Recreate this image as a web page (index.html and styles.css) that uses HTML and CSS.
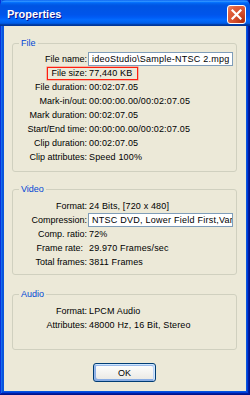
FILE: index.html
```html
<!DOCTYPE html>
<html>
<head>
<meta charset="utf-8">
<link rel="stylesheet" href="styles.css">
</head>
<body>
<div class="window">
  <div class="titlebar">
    <span class="title">Properties</span>
    <button class="close" aria-label="Close">
      <svg width="11" height="11" viewBox="0 0 11 11"><path d="M1.5 1.5 L9.5 9.5 M9.5 1.5 L1.5 9.5" stroke="#fff" stroke-width="2.2" stroke-linecap="square"/></svg>
    </button>
  </div>
  <div class="client">
    <div class="group group-file">
      <span class="legend">File</span>
      <div class="rows">
        <span class="lbl">File name:</span><span class="val"><span class="textbox">ideoStudio\Sample-NTSC 2.mpg</span></span>
        <span class="lbl">File size:</span><span class="val">77,440 KB</span>
        <span class="lbl">File duration:</span><span class="val">00:02:07.05</span>
        <span class="lbl">Mark-in/out:</span><span class="val">00:00:00.00/00:02:07.05</span>
        <span class="lbl">Mark duration:</span><span class="val">00:02:07.05</span>
        <span class="lbl">Start/End time:</span><span class="val">00:00:00.00/00:02:07.05</span>
        <span class="lbl">Clip duration:</span><span class="val">00:02:07.05</span>
        <span class="lbl">Clip attributes:</span><span class="val">Speed 100%</span>
      </div>
      <div class="highlight"></div>
    </div>
    <div class="group group-video">
      <span class="legend">Video</span>
      <div class="rows">
        <span class="lbl">Format:</span><span class="val">24 Bits, [720 x 480]</span>
        <span class="lbl">Compression:</span><span class="val"><span class="textbox">NTSC DVD, Lower Field First,Vari</span></span>
        <span class="lbl">Comp. ratio:</span><span class="val">72%</span>
        <span class="lbl lbl-space">Frame rate:</span><span class="val">29.970 Frames/sec</span>
        <span class="lbl">Total frames:</span><span class="val">3811 Frames</span>
      </div>
    </div>
    <div class="group group-audio">
      <span class="legend">Audio</span>
      <div class="rows">
        <span class="lbl">Format:</span><span class="val">LPCM Audio</span>
        <span class="lbl">Attributes:</span><span class="val">48000 Hz, 16 Bit, Stereo</span>
      </div>
    </div>
    <div class="buttons">
      <button class="ok">OK</button>
    </div>
  </div>
</div>
</body>
</html>
```
FILE: styles.css
```css
* { box-sizing: border-box; }
html, body { margin: 0; padding: 0; }
body {
  width: 250px;
  height: 395px;
  overflow: hidden;
  font-family: "Liberation Sans", Arial, sans-serif;
  font-size: 9px;
  color: #000;
}
.window {
  width: 250px;
  height: 395px;
  display: flex;
  flex-direction: column;
  background: #0855dd;
  box-shadow: inset -1px -1px #00138c, inset 1px 0 #0831d9, inset -2px -2px #001ea0, inset 2px 0 #166aee, inset -3px -3px #003bda, inset 3px 0 #0855dd;
}
.titlebar {
  height: 26px;
  flex: none;
  display: flex;
  align-items: center;
  justify-content: space-between;
  padding: 0 4px 0 7px;
  border-radius: 6px 6px 0 0;
  background: linear-gradient(180deg, #0058ee 0%, #3593ff 4%, #288eff 6%, #127dff 8%, #036ffc 10%, #0262ee 14%, #0057e5 20%, #0054e3 24%, #0055eb 56%, #005bf5 66%, #026afe 76%, #0062ef 86%, #0052d6 92%, #0040ab 94%, #003092 100%);
}
.title {
  font-weight: bold;
  font-size: 11px;
  color: #fff;
  text-shadow: 1px 1px #0f1089;
  margin-top: 1px;
}
.close {
  width: 19px;
  height: 19px;
  margin-top: 2px;
  padding: 0;
  border: 1px solid #fff;
  border-radius: 3px;
  display: flex;
  align-items: center;
  justify-content: center;
  background: radial-gradient(circle at 90% 90%, #b0300e 0%, #d04a28 35%, #e2603c 75%, #ee8a6c 100%);
}
.close svg { display: block; }
.client {
  flex: 1;
  margin: 0 4px 4px 4px;
  background: #ece9d8;
  padding: 17px 9px 0 8px;
  display: flex;
  flex-direction: column;
}
.group {
  position: relative;
  border: 1px solid #d0d0bf;
  border-radius: 3px;
}
.group-file { padding: 8px 0 7px; }
.group-video { margin-top: 17px; padding: 9px 0 5px; }
.group-audio { margin-top: 19px; padding: 9px 0 17px; }
.legend {
  position: absolute;
  top: -6px;
  left: 6px;
  padding: 0 2px;
  line-height: 11px;
  background: #ece9d8;
  color: #0046d5;
}
.rows {
  display: grid;
  grid-template-columns: 74px 1fr;
  column-gap: 2px;
  grid-auto-rows: 14px;
  line-height: 14px;
  white-space: nowrap;
}
.lbl { text-align: right; }
.lbl-space { padding-right: 4px; }
.val { letter-spacing: 0.15px; }
.textbox {
  display: block;
  margin-left: -1px;
  width: 145px;
  height: 14px;
  line-height: 12px;
  padding-left: 3px;
  border: 1px solid #7f9db9;
  background: #fff;
  overflow: hidden;
  letter-spacing: 0.25px;
}
.highlight {
  position: absolute;
  left: 34px;
  top: 23px;
  width: 91px;
  height: 13px;
  border: 1px solid #ff1e10;
  box-shadow: 0 0 0 0.5px rgba(255, 60, 40, 0.6);
}
.buttons {
  margin-top: 13px;
  display: flex;
  justify-content: center;
}
.ok {
  width: 63px;
  height: 19px;
  padding: 0;
  font-family: "Liberation Sans", Arial, sans-serif;
  font-size: 9px;
  color: #000;
  border: 1px solid #003c74;
  border-radius: 3px;
  background: linear-gradient(180deg, #fff, #ecebe6 86%, #d6d0c5);
  box-shadow: inset -1px 1px #cee7ff, inset 1px 2px #98b8ea, inset -2px 2px #bcd4f6, inset 1px -1px #89ade4, inset 2px -2px #89ade4;
}
```
